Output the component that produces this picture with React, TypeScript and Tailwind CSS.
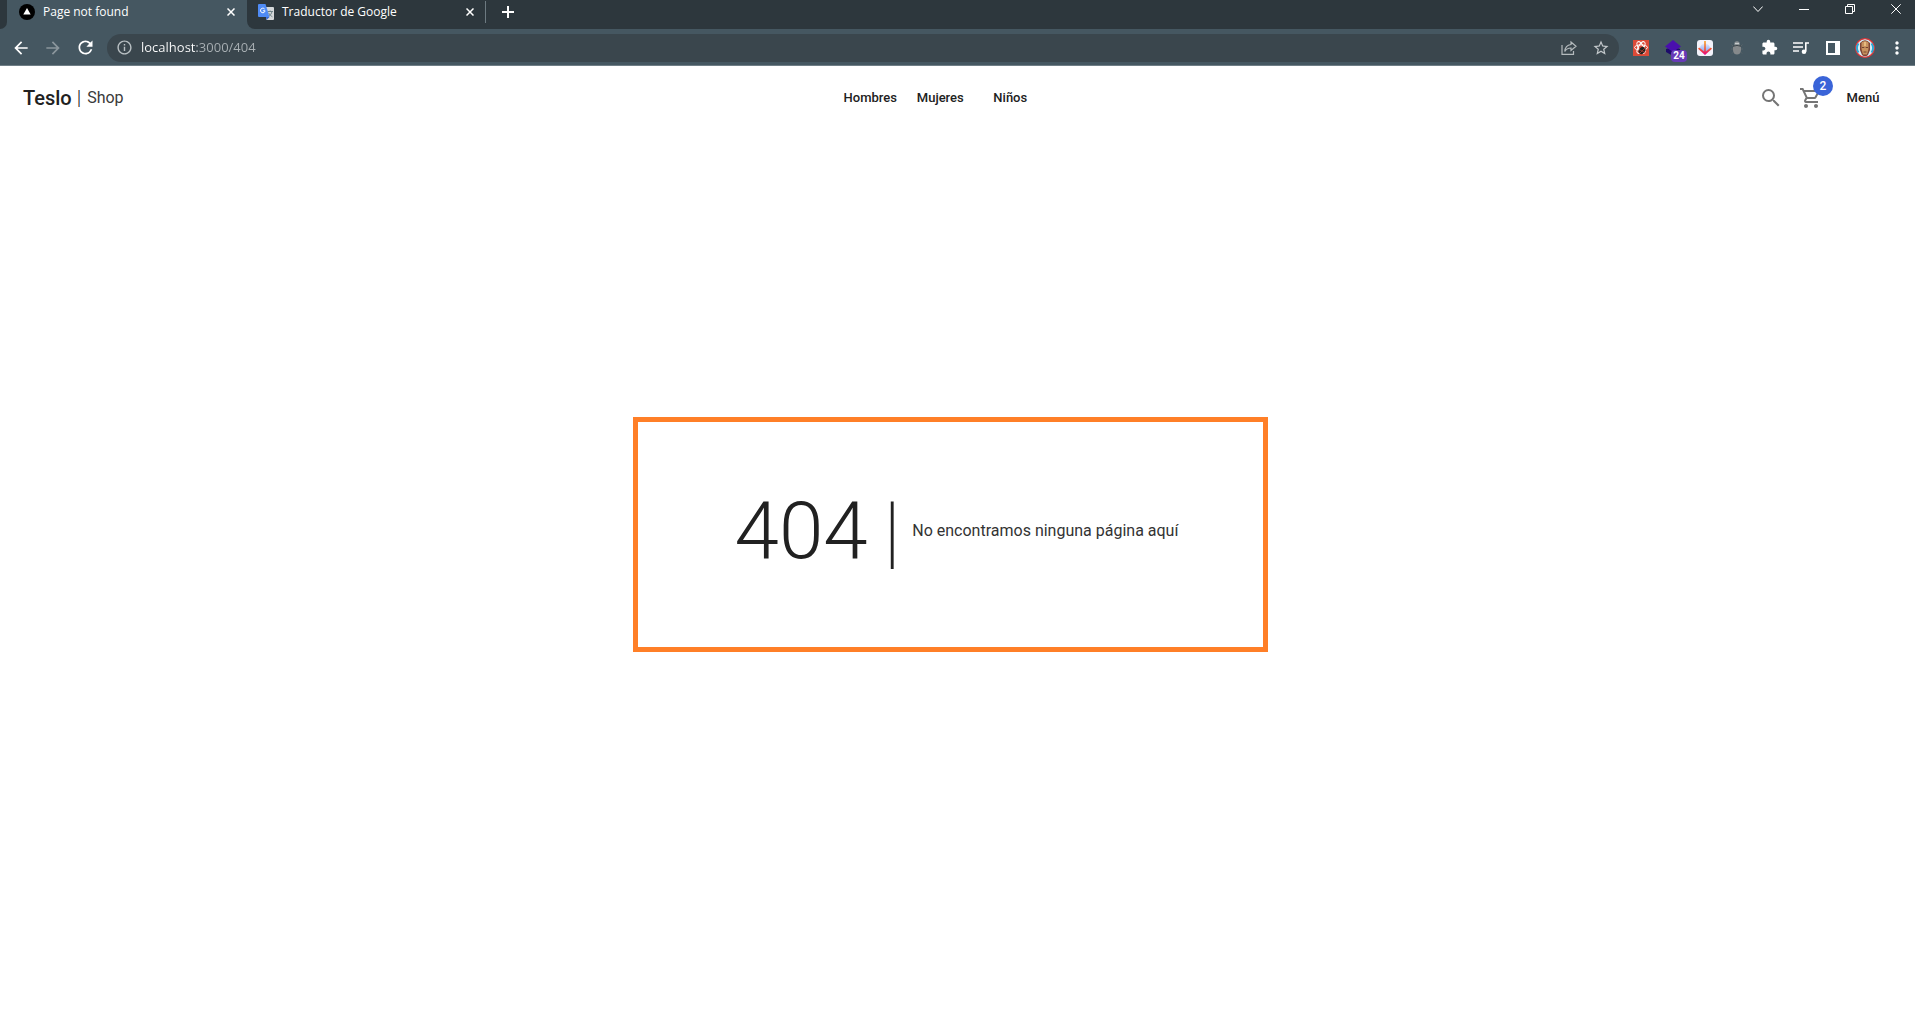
import React from "react";
import {
  MdArrowBack,
  MdArrowForward,
  MdRefresh,
  MdInfoOutline,
  MdStarBorder,
  MdExtension,
  MdMoreVert,
  MdSearch,
  MdOutlineShoppingCart,
} from "react-icons/md";

type IconButtonProps = { label: string; className?: string; children: React.ReactNode };

function ToolButton({ label, className = "text-white", children }: IconButtonProps) {
  return (
    <button type="button" aria-label={label} className={`flex h-7 w-8 shrink-0 items-center justify-center ${className}`}>
      {children}
    </button>
  );
}

function WindowButton({ label, children }: IconButtonProps) {
  return (
    <button type="button" aria-label={label} className="flex h-[18px] w-[46px] items-center justify-center text-white last:w-[42px] last:pl-1">
      <svg width="10" height="10" viewBox="0 0 10 10" fill="none" stroke="currentColor">
        {children}
      </svg>
    </button>
  );
}

function CloseTab({ label }: { label: string }) {
  return (
    <button type="button" aria-label={label} className="flex size-4 shrink-0 items-center justify-center text-white">
      <svg width="8" height="8" viewBox="0 0 8 8" stroke="currentColor" strokeWidth="1.5">
        <path d="M.5.5l7 7M7.500.5l-7 7" />
      </svg>
    </button>
  );
}

function NextFavicon() {
  return (
    <svg width="16" height="16" viewBox="0 0 16 16" className="shrink-0">
      <circle cx="8" cy="8" r="8" fill="#000" />
      <path d="M8 4l3.700 6.500H4.300z" fill="#fff" />
    </svg>
  );
}

function TranslateFavicon() {
  return (
    <svg width="16" height="16" viewBox="0 0 16 16" className="shrink-0">
      <path d="M6 3h9a1 1 0 0 1 1 1v11a1 1 0 0 1-1 1H8.500z" fill="#d5d8da" />
      <path d="M8 13h3.500l-3 3z" fill="#3367d6" />
      <path d="M9.500 7.500H15M12.200 6.500v1M14 7.500c-.4 2-2 4-3.200 5M10.600 8.800c.7 1.600 2.200 3 3.800 4" stroke="#6f8388" strokeWidth="1" fill="none" />
      <path d="M1 0h6.500l4 13H1a1 1 0 0 1-1-1V1a1 1 0 0 1 1-1z" fill="#4f8bf5" />
      <path d="M6.600 5a2.300 2.300 0 1 0 .5 1.800H4.900" stroke="#fff" strokeWidth="1" fill="none" />
    </svg>
  );
}

function TabStrip() {
  return (
    <div className="flex h-[29px] bg-[#455761]">
      <div className="w-[7px] rounded-br-lg bg-[#2d373d]" />
      <div className="flex h-6 w-60 items-center gap-2 pr-2 pl-3">
        <NextFavicon />
        <span className="flex-1 text-[12px] text-white">Page not found</span>
        <CloseTab label="Cerrar Page not found" />
      </div>
      <div className="flex flex-1 justify-between rounded-bl-lg bg-[#2d373d]">
        <div className="flex h-6 items-center">
          <div className="flex w-[239px] items-center gap-2 border-r border-[#6d7a81] py-[2px] pr-[7px] pl-[11px]">
            <TranslateFavicon />
            <span className="flex-1 text-[12px] text-white">Traductor de Google</span>
            <CloseTab label="Cerrar Traductor de Google" />
          </div>
          <button type="button" aria-label="Nueva pestaña" className="ml-4 text-white">
            <svg width="12" height="12" viewBox="0 0 12 12" stroke="currentColor" strokeWidth="2">
              <path d="M6 0v12M0 6h12" />
            </svg>
          </button>
        </div>
        <div className="flex">
          <WindowButton label="Buscar pestañas">
            <path d="M.3 2.500L5 7.500l4.700-5" />
          </WindowButton>
          <WindowButton label="Minimizar">
            <path d="M0 5.500h10" />
          </WindowButton>
          <WindowButton label="Restaurar">
            <path d="M.5 2.500h7v7h-7zM2.500 2.500v-2h7v7h-2" />
          </WindowButton>
          <WindowButton label="Cerrar">
            <path d="M.3.3l9.400 9.400M9.700.3L.3 9.700" />
          </WindowButton>
        </div>
      </div>
    </div>
  );
}

function Extensions() {
  return (
    <>
      <ToolButton label="React Developer Tools">
        <svg width="16" height="16" viewBox="0 0 16 16">
          <path d="M0 0h16v16H0z" fill="#dc4a38" />
          <g fill="none" stroke="#fff" strokeWidth="1">
            <ellipse cx="8" cy="7.500" rx="6.500" ry="2.600" />
            <ellipse cx="8" cy="7.500" rx="6.500" ry="2.600" transform="rotate(60 8 7.500)" />
            <ellipse cx="8" cy="7.500" rx="6.500" ry="2.600" transform="rotate(120 8 7.500)" />
          </g>
          <ellipse cx="9" cy="10.500" rx="3" ry="3.800" transform="rotate(40 9 10.500)" fill="#20201f" />
          <path d="M6 9.500l6 3M7 13l5-5" stroke="#dc4a38" strokeWidth=".6" />
        </svg>
      </ToolButton>
      <ToolButton label="Extensión con 24 avisos" className="relative">
        <svg width="16" height="16" viewBox="0 0 16 16">
          <path d="M1 9l7-2 7 2v2l-7 5-7-4z" fill="#1d0b6b" />
          <path d="M8 0l8 6.500L8 12 0 6.500z" fill="#4a0fae" />
        </svg>
        <span className="absolute top-4 left-[14px] flex h-3 w-4 items-center justify-center rounded-sm bg-[#673ab7] font-[Roboto] text-[10px] font-bold text-white">
          24
        </span>
      </ToolButton>
      <ToolButton label="Descargas">
        <svg width="16" height="16" viewBox="0 0 16 16" fill="none">
          <defs>
            <linearGradient id="arrow" x1="0" y1="0" x2="0" y2="1">
              <stop offset="0" stopColor="#f7a428" />
              <stop offset=".55" stopColor="#f4562f" />
              <stop offset="1" stopColor="#e5008c" />
            </linearGradient>
            <linearGradient id="disc" x1="0" y1="0" x2="0" y2="1">
              <stop offset="0" stopColor="#e4e9fb" />
              <stop offset="1" stopColor="#7f9cf3" />
            </linearGradient>
          </defs>
          <rect width="16" height="16" rx="3" fill="#f3f2fa" />
          <path d="M3 8.500a5 5 0 0 1 10 0l-5 4z" fill="url(#disc)" />
          <path d="M7.200 1h1.600v10.500l5-4L15 8.800 8 15 1 8.800l1.200-1.300 5 4z" fill="url(#arrow)" />
        </svg>
      </ToolButton>
      <ToolButton label="Depurador">
        <svg width="16" height="16" viewBox="0 0 16 16">
          <path d="M4 6L2.500 4.500M12 6l1.500-1.500M4 9H2M12 9h2M4.500 12L3 13.500M11.500 12l1.500 1.500" stroke="#59646a" strokeWidth="1" />
          <ellipse cx="8" cy="4" rx="2.700" ry="2.800" fill="#8d9497" />
          <path d="M6 3.500h4" stroke="#c8cccd" />
          <path d="M4 6.500q4-1.800 8 0v3.500a4 4.500 0 0 1-8 0z" fill="#85898b" />
          <path d="M4 6.300q4-1.800 8 0" stroke="#3e474c" fill="none" />
        </svg>
      </ToolButton>
      <ToolButton label="Extensiones">
        <MdExtension size={17} />
      </ToolButton>
      <ToolButton label="Control multimedia">
        <svg width="16" height="14" viewBox="0 0 16 14" fill="none" stroke="currentColor" strokeWidth="1.600">
          <path d="M0 2h10M0 6h10M0 10h6M16 2h-3.200v8.500" />
          <circle cx="11" cy="10.800" r="2.300" fill="currentColor" stroke="none" />
        </svg>
      </ToolButton>
      <ToolButton label="Panel lateral">
        <svg width="14" height="14" viewBox="0 0 14 14">
          <path fillRule="evenodd" d="M0 0h14v14H0zM2 2v10h7V2z" fill="currentColor" />
        </svg>
      </ToolButton>
      <ToolButton label="Perfil">
        <svg width="20" height="20" viewBox="0 0 20 20">
          <circle cx="10" cy="10" r="9.300" fill="#d9eef5" stroke="#df3537" strokeWidth="1.300" />
          <path d="M3.500 5.500a8 8 0 0 0 0 9M16.500 5.500a8 8 0 0 1 0 9" stroke="#27a9d8" strokeWidth="1.800" fill="none" />
          <path d="M5 5Q10-.5 15 5v7l-2 5Q10 19.500 7 17l-2-5z" fill="#7d4436" />
          <path d="M6.500 4.500Q10 1.500 13.500 4.500V11L12 16.500H8L6.500 11z" fill="#c8925f" />
          <path d="M7 9.500h2.300M10.700 9.500H13M8.500 14h3" stroke="#6b3c2a" strokeWidth=".9" />
          <path d="M9 4h2v4H9z" fill="#e6bb80" />
        </svg>
      </ToolButton>
      <ToolButton label="Menú del navegador">
        <MdMoreVert size={20} />
      </ToolButton>
    </>
  );
}

function Toolbar() {
  return (
    <div className="flex h-[37px] items-center border-b border-[#6f7e86] bg-[#455761] pt-px pr-[2px] pl-[5px]">
      <ToolButton label="Atrás">
        <MdArrowBack size={20} />
      </ToolButton>
      <ToolButton label="Adelante" className="text-[#8b969c]">
        <MdArrowForward size={20} />
      </ToolButton>
      <ToolButton label="Recargar">
        <MdRefresh size={21} />
      </ToolButton>
      <div className="mx-[6px] flex h-7 flex-1 items-center rounded-full bg-[#3a464d] pr-[2px]">
        <span className="flex w-[34px] justify-center text-[#b9c0c3]">
          <MdInfoOutline size={17} />
        </span>
        <input
          aria-label="Dirección"
          type="text"
          defaultValue="localhost:3000/404"
          className="min-w-0 flex-1 bg-[linear-gradient(to_right,#ffffff_56px,#a9b0b4_56px)] bg-clip-text text-[13px] text-transparent outline-none"
        />
        <ToolButton label="Compartir" className="text-[#b4babd]">
          <svg width="16" height="16" viewBox="0 0 16 16" fill="none" stroke="currentColor" strokeWidth="1.200">
            <path d="M1 5v9.400h11.500V11" />
            <path d="M10 2l5 4.200-5 4.200V8C7.300 8 5.200 9 3.800 11.500 4 7.500 6.300 5 10 4.500z" />
          </svg>
        </ToolButton>
        <ToolButton label="Añadir a marcadores" className="text-[#c3c8cb]">
          <MdStarBorder size={18} />
        </ToolButton>
      </div>
      <Extensions />
    </div>
  );
}

function ShopNav() {
  const categories = ["Hombres", "Mujeres", "Niños"];
  return (
    <header className="flex h-16 items-center justify-between pr-5 pl-[23px] font-[Roboto] text-[#212121]">
      <a href="#inicio" className="flex items-center gap-[6px]">
        <span className="text-[20px] font-medium">
          Teslo <span className="font-light">|</span>
        </span>
        <span className="text-[16px] text-[#3a3a3a]">Shop</span>
      </a>
      <nav className="flex gap-1 pl-[6px] text-[13px] font-medium">
        {categories.map((name) => (
          <a key={name} href={`#${name}`} className="w-[66px] py-1 text-center">
            {name}
          </a>
        ))}
      </nav>
      <div className="flex items-center">
        <button type="button" aria-label="Buscar" className="flex size-10 items-center justify-center text-[#757575]">
          <MdSearch size={24} />
        </button>
        <a href="#carrito" aria-label="Carrito" className="relative flex size-10 items-center justify-center text-[#757575]">
          <MdOutlineShoppingCart size={24} />
          <span className="absolute -top-[2px] -right-[2px] flex size-5 items-center justify-center rounded-full bg-[#3a64d8] text-[12px] font-medium text-white">
            2
          </span>
        </a>
        <button type="button" className="w-16 py-1 text-center text-[13px] font-medium">
          Menú
        </button>
      </div>
    </header>
  );
}

export default function App() {
  return (
    <div className="flex min-h-screen flex-col bg-white font-['Open_Sans',sans-serif]">
      <TabStrip />
      <Toolbar />
      <ShopNav />
      <main className="flex flex-1 items-center justify-center pr-[14px] pb-[88px] font-[Roboto] text-[#212121]">
        <section className="flex h-[235px] w-[635px] items-center justify-center border-[5px] border-[#ff7f27] pb-2 pl-3">
          <h1 className="flex gap-4 text-[80px] leading-none font-light">
            404 <span className="font-extralight">|</span>
          </h1>
          <p className="ml-3 text-[16px] text-[#333333]">No encontramos ninguna página aquí</p>
        </section>
      </main>
    </div>
  );
}
